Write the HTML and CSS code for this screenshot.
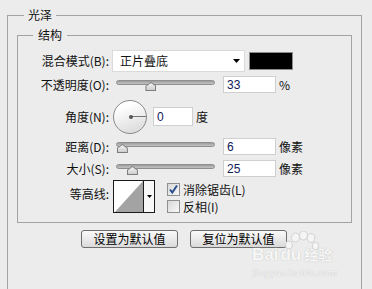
FILE: index.html
```html
<!DOCTYPE html>
<html lang="zh-CN">
<head>
    <meta charset="UTF-8">
    <title>光泽</title>
    <link rel="stylesheet" href="styles.css">
</head>
<body>
    <fieldset class="group outer">
        <legend>光泽</legend>

        <fieldset class="group inner">
            <legend>结构</legend>

            <div class="form">
                <label class="lbl">混合模式(B):</label>
                <div class="ctl">
                    <div class="select">
                        <span>正片叠底</span>
                        <svg class="arrow" width="7" height="4" viewBox="0 0 7 4"><path d="M0 0H7L3.5 4Z" fill="#000"/></svg>
                    </div>
                    <div class="swatch"></div>
                </div>

                <label class="lbl">不透明度(O):</label>
                <div class="ctl">
                    <div class="slider"><div class="track"></div><span class="thumb" style="left: 33%"></span></div>
                    <input class="num" type="text" value="33">
                    <span class="unit">%</span>
                </div>

                <label class="lbl">角度(N):</label>
                <div class="ctl">
                    <div class="dial"><span class="hand"></span><span class="pin"></span></div>
                    <input class="num small" type="text" value="0">
                    <span class="unit">度</span>
                </div>

                <label class="lbl">距离(D):</label>
                <div class="ctl">
                    <div class="slider"><div class="track"></div><span class="thumb" style="left: 6%"></span></div>
                    <input class="num" type="text" value="6">
                    <span class="unit">像素</span>
                </div>

                <label class="lbl">大小(S):</label>
                <div class="ctl">
                    <div class="slider"><div class="track"></div><span class="thumb" style="left: 15.5%"></span></div>
                    <input class="num" type="text" value="25">
                    <span class="unit">像素</span>
                </div>

                <label class="lbl contour-lbl">等高线:</label>
                <div class="ctl top">
                    <div class="contour">
                        <svg class="curve" width="28" height="31" viewBox="0 0 28 31"><path d="M0 31L28 0V31Z" fill="#a3a3a3"/></svg>
                        <div class="drop">
                            <svg width="5" height="3" viewBox="0 0 5 3"><path d="M0 0H5L2.5 3Z" fill="#000"/></svg>
                        </div>
                    </div>
                    <div class="checks">
                        <label class="check">
                            <span class="box">
                                <svg width="11" height="11" viewBox="0 0 11 11"><path d="M2 5.5L4.3 8.5L9 1.5" fill="none" stroke="#2b4f8e" stroke-width="2"/></svg>
                            </span>
                            消除锯齿(L)
                        </label>
                        <label class="check">
                            <span class="box"></span>
                            反相(I)
                        </label>
                    </div>
                </div>
            </div>
        </fieldset>

        <div class="buttons">
            <button type="button">设置为默认值</button>
            <button type="button">复位为默认值</button>
        </div>
    </fieldset>

    <div class="watermark">
        <svg class="paw" width="36" height="20" viewBox="0 0 36 20">
            <ellipse cx="5" cy="14" rx="3.5" ry="4"/>
            <ellipse cx="11.5" cy="6.5" rx="4" ry="4.5"/>
            <ellipse cx="19.5" cy="4.5" rx="4" ry="4.5"/>
            <ellipse cx="27" cy="7" rx="3.8" ry="4.3"/>
            <ellipse cx="31.5" cy="15" rx="3.3" ry="3.8"/>
        </svg>
        <div class="brand">Bai<span class="du">du</span><span class="jy">经验</span></div>
        <div class="site">jingyan.baidu.com</div>
    </div>
</body>
</html>
```

FILE: styles.css
```css
html, body {
    overflow: hidden;
}
body {
    margin: 0;
    background: #ececec;
    font-family: "Noto Sans CJK SC", "Liberation Sans", sans-serif;
    font-size: 12px;
    color: #111;
    width: 372px;
    height: 289px;
}
.group {
    margin: 0;
    padding: 0;
    min-width: 0;
    border: 1px solid #a3a3a3;
    box-sizing: border-box;
}
.group legend {
    line-height: 14px;
    height: 14px;
    font-size: 12px;
}
.outer {
    width: 355px;
    height: 282px;
    margin: 8px 0 0 7px;
}
.outer > legend {
    margin-left: 16px;
    padding: 0 4px;
}
.inner {
    margin: 6px 9px 0 9px;
    padding: 7px 0 9px 0;
}
.inner > legend {
    margin-left: 15px;
    padding: 0 5px;
}
.form {
    display: grid;
    grid-template-columns: 91px 1fr;
    grid-template-rows: 23px 25px 39px 21px 23px 33px;
    column-gap: 3px;
    align-items: center;
}
.lbl {
    text-align: right;
    line-height: 14px;
    white-space: nowrap;
}
.contour-lbl {
    margin-top: -6px;
}
.ctl {
    display: flex;
    align-items: center;
    height: 100%;
}
.ctl.top {
    align-items: flex-start;
}
.select {
    width: 133px;
    height: 22px;
    box-sizing: border-box;
    background: #fff;
    border: 1px solid #dadada;
    display: flex;
    align-items: center;
    justify-content: space-between;
    padding: 0 4px 0 7px;
    line-height: 14px;
}
.select .arrow {
    margin-top: 1px;
}
.swatch {
    width: 44px;
    height: 18px;
    box-sizing: border-box;
    margin-left: 4px;
    background: #000;
    border: 1px solid #8c8c8c;
}
.slider {
    position: relative;
    width: 106px;
    height: 17px;
}
.track {
    position: absolute;
    left: 4px;
    right: 3px;
    top: 4px;
    height: 5px;
    box-sizing: border-box;
    border: 1px solid #8e8e8e;
    border-radius: 3px;
    background: linear-gradient(#9c9c9c, #c4c4c4);
}
.thumb {
    position: absolute;
    top: 6px;
    width: 11px;
    height: 9px;
    margin-left: -1.5px;
    background: #7c7c7c;
    clip-path: polygon(0 45%, 50% 0, 100% 45%, 100% 100%, 0 100%);
}
.thumb::after {
    content: "";
    position: absolute;
    left: 1px;
    right: 1px;
    top: 1px;
    bottom: 1px;
    background: linear-gradient(#f2f2f2, #cfcfcf);
    clip-path: polygon(0 45%, 50% 0, 100% 45%, 100% 100%, 0 100%);
}
.num {
    width: 53px;
    height: 17px;
    box-sizing: border-box;
    margin: 0 0 0 5px;
    padding: 0 0 0 3px;
    border: 1px solid #cfcfcf;
    background: #fff;
    font-family: "Liberation Sans", sans-serif;
    font-size: 12px;
    color: #10205a;
    outline: none;
}
.num.small {
    width: 40px;
    height: 19px;
    margin-left: 6px;
}
.unit {
    margin-left: 3px;
    line-height: 14px;
}
.dial {
    position: relative;
    width: 34px;
    height: 34px;
    margin-left: 1px;
    box-sizing: border-box;
    border: 1px solid #8a8a8a;
    border-radius: 50%;
    background: linear-gradient(160deg, #ffffff 20%, #d6d6d6 100%);
}
.hand {
    position: absolute;
    left: 16px;
    top: 15.5px;
    width: 16px;
    height: 1px;
    background: #777;
}
.pin {
    position: absolute;
    left: 14.5px;
    top: 14px;
    width: 4px;
    height: 4px;
    border-radius: 50%;
    background: #555;
}
.contour {
    display: flex;
    width: 42px;
    height: 33px;
    margin-left: 1px;
    box-sizing: border-box;
    border: 1px solid #1a1a1a;
    background: #fff;
}
.curve {
    display: block;
    margin-left: 1px;
}
.drop {
    flex: 1;
    display: flex;
    align-items: center;
    justify-content: center;
    border-left: 1px solid #1a1a1a;
    background: #f7f7f7;
}
.checks {
    display: flex;
    flex-direction: column;
    gap: 4px;
    margin: 3px 0 0 12px;
}
.check {
    display: flex;
    align-items: center;
    gap: 3px;
    height: 13px;
    line-height: 14px;
}
.box {
    width: 13px;
    height: 13px;
    box-sizing: border-box;
    border: 1px solid #8e8f8f;
    background: linear-gradient(135deg, #d8d8d8, #f8f8f8);
    display: flex;
    align-items: center;
    justify-content: center;
}
.buttons {
    display: flex;
    justify-content: center;
    gap: 12px;
    margin-top: 7px;
    padding-right: 1px;
}
.buttons button {
    width: 97px;
    height: 18px;
    padding: 0;
    border: 1px solid #6e6e6e;
    border-radius: 3px;
    background: linear-gradient(#fafafa, #dadada);
    font-family: "Noto Sans CJK SC", sans-serif;
    font-size: 12px;
    line-height: 14px;
    color: #000;
}
.watermark {
    position: absolute;
    left: 252px;
    top: 244px;
    color: #f7f7f7;
    text-shadow: 0 0 1px #c9c9c9, 0 0 1px #c9c9c9;
    font-family: "Liberation Sans", sans-serif;
    pointer-events: none;
}
.paw {
    position: absolute;
    left: 32px;
    top: -13px;
    fill: #f5f5f5;
    stroke: #d2d2d2;
    stroke-width: 1;
}
.brand {
    font-size: 17px;
    font-weight: bold;
    line-height: 20px;
    white-space: nowrap;
}
.du {
    margin-left: 2px;
}
.jy {
    margin-left: 3px;
    font-family: "Noto Sans CJK SC", sans-serif;
    font-size: 14px;
}
.site {
    font-family: "Liberation Serif", serif;
    font-size: 11px;
    line-height: 12px;
    margin-top: 1px;
    letter-spacing: 0.2px;
}
```
